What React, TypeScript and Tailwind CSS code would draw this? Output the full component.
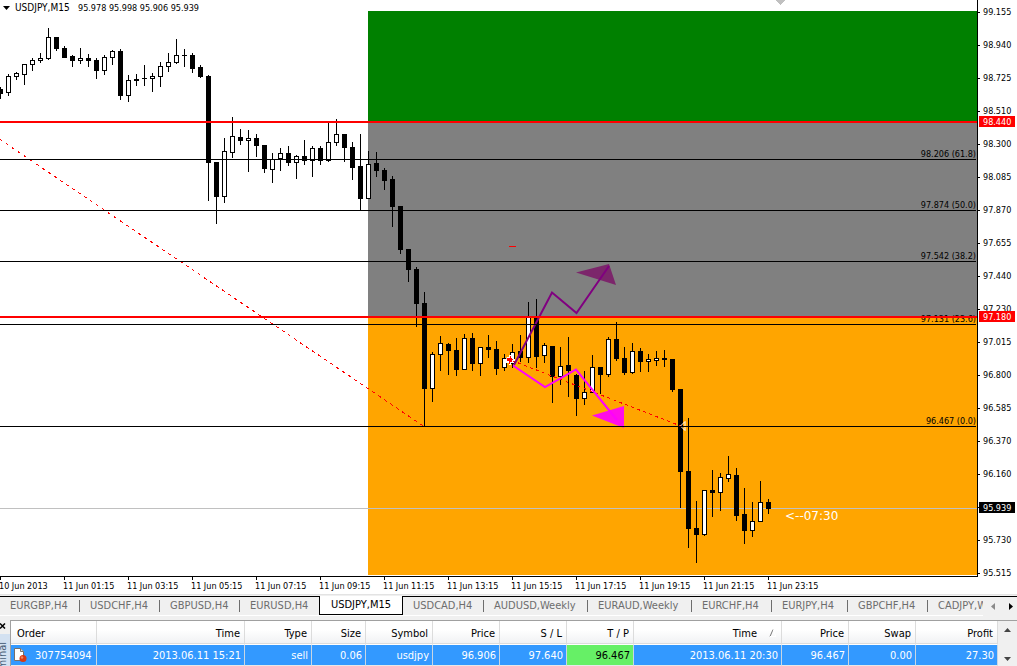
import React from "react";
import clsx from "clsx";

type Candle = {
  high: number;
  top: number;
  bottom: number;
  low: number;
  up: boolean;
};

const STEP = 8;

// high, top, bottom, low, 1 = bullish
const rawCandles: number[][] = [
  [87, 89, 94, 99, 0], [74, 76, 93, 96, 1], [72, 73, 77, 80, 1], [64, 64, 75, 85, 1],
  [58, 60, 65, 71, 1], [53, 58, 61, 63, 1], [28, 37, 59, 60, 1], [37, 37, 49, 51, 0],
  [46, 48, 58, 58, 0], [55, 56, 61, 67, 0], [48, 58, 61, 64, 1], [54, 58, 61, 67, 0],
  [58, 60, 71, 79, 0], [55, 57, 71, 75, 1], [50, 51, 58, 65, 1], [49, 51, 96, 100, 0],
  [75, 80, 96, 102, 1], [74, 79, 81, 86, 0], [65, 78, 79, 86, 0], [73, 76, 79, 92, 1],
  [62, 66, 77, 87, 1], [53, 62, 67, 72, 1], [39, 55, 63, 64, 1], [49, 55, 56, 67, 0],
  [53, 55, 69, 73, 0], [65, 67, 77, 78, 0], [75, 76, 163, 201, 0], [162, 162, 197, 224, 0],
  [138, 151, 197, 203, 1], [117, 136, 153, 158, 1], [129, 137, 141, 145, 0], [130, 138, 141, 172, 1],
  [134, 138, 146, 157, 0], [145, 145, 169, 173, 0], [153, 159, 170, 183, 1], [148, 153, 159, 171, 1],
  [146, 153, 163, 166, 0], [155, 156, 163, 179, 1], [140, 156, 161, 165, 0], [146, 148, 161, 177, 1],
  [146, 148, 161, 165, 0], [122, 142, 161, 162, 1], [119, 134, 143, 146, 1], [134, 134, 148, 162, 0],
  [142, 147, 168, 180, 0], [134, 166, 199, 210, 0], [151, 164, 199, 199, 1], [152, 163, 171, 177, 0],
  [168, 170, 181, 190, 0], [176, 179, 207, 227, 0], [206, 206, 250, 254, 0], [249, 249, 270, 282, 0],
  [267, 269, 304, 327, 0], [292, 303, 389, 426, 0], [352, 354, 389, 402, 1], [336, 343, 355, 371, 1],
  [343, 344, 351, 375, 0], [338, 350, 370, 376, 0], [334, 338, 370, 370, 1], [333, 338, 364, 371, 0],
  [347, 347, 364, 376, 1], [335, 347, 350, 358, 0], [341, 349, 369, 375, 0], [354, 358, 368, 371, 1],
  [344, 352, 364, 368, 1], [335, 351, 358, 362, 0], [302, 317, 358, 363, 1], [299, 317, 357, 368, 0],
  [343, 345, 356, 363, 1], [346, 346, 377, 403, 0], [347, 366, 377, 385, 1], [337, 365, 371, 397, 0],
  [374, 375, 399, 416, 0], [371, 392, 399, 405, 1], [355, 367, 393, 393, 1], [367, 367, 375, 394, 0],
  [337, 339, 375, 377, 1], [322, 339, 359, 361, 0], [347, 358, 373, 375, 0], [343, 351, 373, 374, 1],
  [348, 351, 362, 372, 0], [354, 359, 362, 372, 1], [351, 358, 361, 366, 1], [350, 358, 360, 367, 0],
  [359, 359, 390, 392, 0], [389, 389, 472, 508, 0], [418, 471, 529, 548, 0], [501, 528, 535, 563, 0],
  [490, 490, 535, 536, 1], [470, 490, 493, 517, 0], [473, 477, 493, 511, 1], [456, 474, 479, 482, 1],
  [468, 475, 516, 521, 0], [488, 514, 531, 544, 0], [502, 521, 531, 537, 1], [481, 502, 522, 522, 1],
  [499, 502, 509, 514, 0],
];

const candles: Candle[] = rawCandles.map(([high, top, bottom, low, up]) => ({
  high,
  top,
  bottom,
  low,
  up: up === 1,
}));

const fibLevels = [
  { y: 159, label: "98.206 (61.8)" },
  { y: 210, label: "97.874 (50.0)" },
  { y: 261, label: "97.542 (38.2)" },
  { y: 324, label: "97.131 (23.6)" },
  { y: 426, label: "96.467 (0.0)" },
];

const prices = [
  "99.155", "98.940", "98.725", "98.510", "98.300", "98.085", "97.870", "97.655", "97.440",
  "97.230", "97.015", "96.800", "96.585", "96.370", "96.160", "95.945", "95.730", "95.515",
];

const priceTags = [
  { y: 122, label: "98.440", fill: "#ff0000" },
  { y: 317, label: "97.180", fill: "#ff0000" },
  { y: 508, label: "95.939", fill: "#000000" },
];

const times = [
  "10 Jun 2013", "11 Jun 01:15", "11 Jun 03:15", "11 Jun 05:15", "11 Jun 07:15", "11 Jun 09:15", "11 Jun 11:15",
  "11 Jun 13:15", "11 Jun 15:15", "11 Jun 17:15", "11 Jun 19:15", "11 Jun 21:15", "11 Jun 23:15",
];

const tabs = [
  { label: "EURGBP,H4", width: "w-20" },
  { label: "USDCHF,H4", width: "w-20" },
  { label: "GBPUSD,H4", width: "w-20" },
  { label: "EURUSD,H4", width: "w-[79px]" },
  { label: "USDJPY,M15", width: "w-[84px]" },
  { label: "USDCAD,H4", width: "w-[81px]" },
  { label: "AUDUSD,Weekly", width: "w-[104px]" },
  { label: "EURAUD,Weekly", width: "w-[104px]" },
  { label: "EURCHF,H4", width: "w-20" },
  { label: "EURJPY,H4", width: "w-[76px]" },
  { label: "GBPCHF,H4", width: "w-20" },
  { label: "CADJPY,Weekly", width: "w-[104px]" },
];

const ACTIVE_TAB = 4;

const columns = [
  { title: "Order", value: "307754094", width: "w-[86px]" },
  { title: "Time", value: "2013.06.11 15:21", width: "w-[148px]" },
  { title: "Type", value: "sell", width: "w-[67px]" },
  { title: "Size", value: "0.06", width: "w-[54px]" },
  { title: "Symbol", value: "usdjpy", width: "w-[67px]" },
  { title: "Price", value: "96.906", width: "w-[67px]" },
  { title: "S / L", value: "97.640", width: "w-[67px]" },
  { title: "T / P", value: "96.467", width: "w-[67px]", hit: true },
  { title: "Time", value: "2013.06.11 20:30", width: "w-[148px]", sorted: true },
  { title: "Price", value: "96.467", width: "w-[67px]" },
  { title: "Swap", value: "0.00", width: "w-[67px]" },
  { title: "Profit", value: "27.30", width: "w-auto" },
];

function CandleShape({ candle, x }: { candle: Candle; x: number }) {
  const { high, top, bottom, low, up } = candle;
  const height = bottom - top;
  return (
    <g>
      <rect x={x} y={high} width={1} height={low - high} />
      <rect x={x - 2} y={top} width={5} height={height} />
      {up && height > 2 && <rect x={x - 1} y={top + 1} width={3} height={height - 2} fill="#fff" />}
    </g>
  );
}

function PricePlot() {
  return (
    <svg className="block h-[577px] min-w-0 flex-1 text-[9px]" role="img" aria-label="USDJPY M15 chart">
      <g shapeRendering="crispEdges">
        <rect x={368} y={11} width="100%" height={110} fill="#008000" />
        <rect x={368} y={121} width="100%" height={196} fill="#808080" />
        <rect x={368} y={317} width="100%" height={258} fill="#ffa500" />
        <rect x={0} y={508} width="100%" height={1} fill="#c0c0c0" />
        <path d="M776 0h9v1h-1v1h-1v1h-1v1h-1v1h-1v-1h-1v-1h-1v-1h-1v-1h-1z" fill="#c0c0c0" />
        {candles.map((candle, i) => (
          <CandleShape key={i} candle={candle} x={i * STEP} />
        ))}
        <path d="M0 139.5L424 426.5" stroke="#f00" strokeDasharray="3 4.25" fill="none" />
        <path d="M512 360.5L682 426.5" stroke="#f00" strokeDasharray="3 3.4" fill="none" />
        <rect x={509} y={246} width={7} height={1} fill="#f00" />
      </g>

      {/* projected moves */}
      <g fill="none" strokeWidth={2}>
        <path d="M576 272.5L609 264L616 285z" fill="#7c266b" />
        <path d="M514 365L552 292.5L576.5 313L609 266" stroke="#800080" />
        <path d="M592 415.5L624 406V428z" fill="#ff0de9" />
        <path d="M513 365.5L545 387L576 369.5L617 420" stroke="#f0f" />
      </g>

      <path d="M507 357h2v-2h2v2h2v2h2v2h-2v2h-2v2h-2v-2h-3v-2h-1v-2h1z" fill="#fff" />
      <path d="M507 358h3v-2h1v2h1v1h1v1h-1v2h-2v2h-1v-3h-2z" fill="#f00" />
      <path d="M685 421.5L680.5 426L685 430.5z" fill="none" stroke="#fff" />

      <g shapeRendering="crispEdges">
        {fibLevels.map((level) => (
          <React.Fragment key={level.label}>
            <rect x={0} y={level.y} width="99.9%" height={1} />
            <text x="99.9%" y={level.y - 2} textAnchor="end">
              {level.label}
            </text>
          </React.Fragment>
        ))}
        <rect x={0} y={121} width="100%" height={2} fill="#f00" />
        <rect x={0} y={316} width="100%" height={2} fill="#f00" />
        <rect x={0} y={576} width="100%" height={1} />
      </g>

      <path d="M3 6h7l-3.5 4z" />
      <text x={15} y={11} className="text-[10px]">
        USDJPY,M15
      </text>
      <text x={78} y={11}>
        95.978 95.998 95.906 95.939
      </text>
      <text x={785} y={520} fill="#fff" className="font-['DejaVu_Sans',sans-serif] text-[12px]">
        {"<--07:30"}
      </text>
    </svg>
  );
}

function PriceAxis() {
  return (
    <svg className="block h-[577px] w-10 shrink-0 text-[9px]" aria-label="Price scale">
      <rect x={0} y={0} width={1} height={577} />
      {prices.map((price, i) => (
        <React.Fragment key={price}>
          <rect x={1} y={12 + i * 33} width={2} height={1} />
          <text x={6} y={15 + i * 33}>
            {price}
          </text>
        </React.Fragment>
      ))}
      {priceTags.map((tag) => (
        <React.Fragment key={tag.label}>
          <rect x={2} y={tag.y - 6} width={36} height={11} fill={tag.fill} />
          <text x={6} y={tag.y + 3} fill="#fff">
            {tag.label}
          </text>
        </React.Fragment>
      ))}
    </svg>
  );
}

function TimeAxis() {
  return (
    <svg className="block h-[17px] w-full text-[9px]" aria-label="Time scale">
      {times.map((time, i) => (
        <React.Fragment key={time}>
          <rect x={i * 64} y={0} width={1} height={3} />
          <text x={i * 64 - 1} y={12}>
            {time}
          </text>
        </React.Fragment>
      ))}
    </svg>
  );
}

function ChartTabs() {
  return (
    <nav className="flex h-6 border-t border-[#e3e3e3] bg-[#f0f0f0] pt-px" aria-label="Charts">
      <div className="flex h-5 min-w-0 flex-1 overflow-hidden border-b border-white">
        {tabs.map((tab, i) => {
          const active = i === ACTIVE_TAB;
          const divided = !active && i !== ACTIVE_TAB - 1;
          return (
            <button
              key={tab.label}
              type="button"
              className={clsx(
                "flex h-[19px] shrink-0 items-center whitespace-nowrap pb-px text-[11px] leading-none",
                tab.width,
                active
                  ? "justify-center border-x border-b border-black bg-white text-black"
                  : "justify-between border-t border-black pl-[10px] text-[#6d6d6d]",
              )}
            >
              <span>{tab.label}</span>
              {divided && <span className="h-3 w-px bg-[#6d6d6d]" />}
            </button>
          );
        })}
      </div>
      <div className="flex h-[19px] w-[34px] shrink-0 items-center justify-between border-t border-black pr-1 pl-2">
        <button type="button" aria-label="Scroll tabs left">
          <svg className="block h-[7px] w-1" fill="#8a8a8a">
            <path d="M4 0v7L0 3.5z" />
          </svg>
        </button>
        <button type="button" aria-label="Scroll tabs right">
          <svg className="block h-[7px] w-1">
            <path d="M0 0v7l4-3.5z" />
          </svg>
        </button>
      </div>
    </nav>
  );
}

function OrderIcon() {
  return (
    <svg className="h-4 w-[15px] shrink-0" viewBox="0 0 15 16">
      <path d="M1.5 1.5h6l3 3v9h-9z" fill="#fff" stroke="#77706b" />
      <path d="M7.5 1.5v3h3" fill="#ddd" stroke="#77706b" />
      <circle cx="10" cy="11.5" r="3.5" fill="#d93a12" />
      <circle cx="9" cy="10.5" r="1.2" fill="#f4855e" />
    </svg>
  );
}

function Terminal() {
  return (
    <section className="flex h-[46px] bg-[#f0f0f0]" aria-label="Terminal">
      <div className="flex w-[10px] shrink-0 flex-col overflow-hidden">
        <button type="button" aria-label="Close terminal" className="flex h-[14px] shrink-0 items-start pt-[3px]">
          <svg className="h-[6px] w-[6px]" stroke="#000" strokeWidth="1.5">
            <path d="M0 .5l5 5M5 .5l-5 5" />
          </svg>
        </button>
        <div className="flex h-8 shrink-0 items-start justify-end overflow-hidden bg-[#d3e1f1] pt-2 pr-px">
          <span className="rotate-180 text-[11px] leading-[12px] text-[#4b5f78] [writing-mode:vertical-rl]">Terminal</span>
        </div>
      </div>
      <div className="min-w-0 flex-1 border-t border-l border-[#a0a0a0] bg-white">
        <table className="w-full table-fixed border-separate border-spacing-0 text-[11px] leading-none">
          <thead>
            <tr className="h-[23px]">
              {columns.map((col, i) => (
                <th
                  key={i}
                  scope="col"
                  className={clsx(
                    "border-r border-b border-[#dcdcdc] bg-linear-to-b from-white from-40% to-[#f1f2f4] p-0 pt-[2px] font-normal",
                    col.width,
                    i === 0 ? "pl-[6px] text-left" : "pr-1 text-right",
                  )}
                >
                  {col.sorted ? (
                    <span className="flex items-center justify-end gap-3">
                      {col.title}
                      <svg className="h-2 w-2" fill="none">
                        <path d="M1 7.5L4 .5" stroke="#777" />
                        <path d="M4 .5L7 7.5H1" stroke="#fff" />
                      </svg>
                    </span>
                  ) : (
                    col.title
                  )}
                </th>
              ))}
            </tr>
          </thead>
          <tbody>
            <tr className="h-[22px] text-white">
              {columns.map((col, i) => (
                <td
                  key={i}
                  className={clsx(
                    "border-t border-r border-b border-t-white border-r-[#c9d6e3] border-b-[#e8e8e8] p-0 pr-[3px] text-right",
                    col.hit ? "bg-[#66f066] text-black" : "bg-[#3399ff]",
                  )}
                >
                  {i === 0 ? (
                    <span className="flex items-center gap-[7px] pl-[2px]">
                      <OrderIcon />
                      {col.value}
                    </span>
                  ) : (
                    col.value
                  )}
                </td>
              ))}
            </tr>
          </tbody>
        </table>
      </div>
      <div className="flex w-[19px] shrink-0 flex-col items-center justify-between border-t border-[#a0a0a0] pt-[7px] pb-[5px]">
        <button type="button" aria-label="Scroll up">
          <svg className="block h-1 w-[7px]" fill="#444">
            <path d="M0 4h7L3.5 0z" />
          </svg>
        </button>
        <button type="button" aria-label="Scroll down">
          <svg className="block h-1 w-[7px]" fill="#444">
            <path d="M0 0h7L3.5 4z" />
          </svg>
        </button>
      </div>
    </section>
  );
}

export default function App() {
  return (
    <main className="w-full overflow-hidden bg-white font-['DejaVu_Sans_Condensed','DejaVu_Sans',sans-serif] text-black">
      <div className="flex w-full">
        <PricePlot />
        <PriceAxis />
      </div>
      <TimeAxis />
      <ChartTabs />
      <div className="h-[2px] bg-[#f0f0f0]" />
      <Terminal />
    </main>
  );
}
